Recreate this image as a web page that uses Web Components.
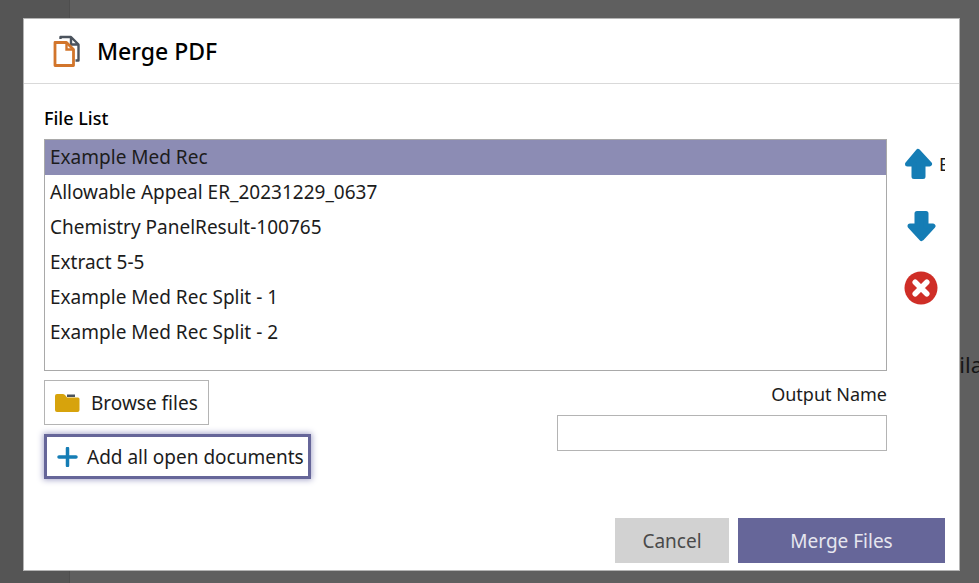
<!DOCTYPE html>
<html lang="en">
<head>
<meta charset="utf-8">
<title>Merge PDF</title>
<style>
  body {
    margin: 0;
    font-family: "Noto Sans", "Open Sans", sans-serif;
    font-size: 18px;
    line-height: 24px;
    color: #1c1c1c;
  }
</style>
</head>
<body>
<app-backdrop>
  <span slot="page">ila</span>
  <merge-dialog></merge-dialog>
</app-backdrop>

<script>
const backdropTemplate = document.createElement('template')
backdropTemplate.innerHTML = `
<style>
  :host {
    display: grid;
    grid-template-columns: 70px 1fr;
    min-height: 100vh;
    background: #5f5f5f;
    overflow: hidden;
  }

  aside {
    grid-area: 1 / 1;
    background: #555555;
    border-right: 1px solid #4e4e4e;
  }

  /* the page is a little wider than the window */
  main {
    grid-area: 1 / 2;
    margin-right: -4px;
    padding-top: 350px;
    text-align: right;
    font-size: 22px;
    line-height: 28px;
    color: #161616;
  }

  .overlay {
    grid-area: 1 / 1 / 2 / 3;
    z-index: 1;
    display: grid;
    padding: 18px 19px 12px 23px;
  }
</style>

<aside></aside>
<main><slot name="page"></slot></main>
<div class="overlay"><slot></slot></div>
`

customElements.define('app-backdrop',

  class extends HTMLElement {
    constructor() {
      super()

      this.attachShadow({ mode: 'open' }).appendChild(backdropTemplate.content.cloneNode(true))
    }
  }
)

const buttonTemplate = document.createElement('template')
buttonTemplate.innerHTML = `
<style>
  :host {
    display: block;
  }

  button {
    display: flex;
    align-items: center;
    justify-content: center;
    gap: 11px;
    box-sizing: border-box;
    width: 100%;
    height: 45px;
    margin: 0;
    padding: 0 10px;
    border: 1px solid #b4b4b4;
    background: #ffffff;
    color: #1c1c1c;
    font: inherit;
    font-size: 19px;
    white-space: nowrap;
    cursor: pointer;
  }

  :host([variant="focused"]) button {
    gap: 9px;
    padding: 0 4px 0 10px;
    border: 3px solid #666699;
    box-shadow: 0 0 6px 1px #a9a9cc;
  }

  :host([variant="secondary"]) button {
    border-color: #d2d2d2;
    background: #d2d2d2;
    color: #4a4a4a;
  }

  :host([variant="primary"]) button {
    border-color: #666699;
    background: #666699;
    color: #e6e6ef;
  }
</style>

<button type="button"><slot name="icon"></slot><slot></slot></button>
`

customElements.define('action-button',

  class extends HTMLElement {
    constructor() {
      super()

      this.attachShadow({ mode: 'open' }).appendChild(buttonTemplate.content.cloneNode(true))
    }
  }
)

const listTemplate = document.createElement('template')
listTemplate.innerHTML = `
<style>
  :host {
    display: block;
    border: 1px solid #a9a9a9;
    background: #ffffff;
  }

  ul {
    min-height: 230px;
    margin: 0;
    padding: 0;
    list-style: none;
  }

  li {
    padding: 5px;
    font-size: 19px;
    line-height: 25px;
  }

  li[aria-selected="true"] {
    background: #8c8cb4;
  }
</style>

<ul role="listbox" aria-label="File List"></ul>
`

customElements.define('file-list',

  class extends HTMLElement {

    #list

    constructor() {
      super()

      this.attachShadow({ mode: 'open' }).appendChild(listTemplate.content.cloneNode(true))

      this.#list = this.shadowRoot.querySelector('ul')
    }

    renderFiles(files, selected) {
      this.#list.innerHTML = ''
      files.forEach((file, index) => {
        const item = document.createElement('li')
        item.setAttribute('role', 'option')
        item.setAttribute('aria-selected', String(index === selected))
        item.textContent = file
        this.#list.appendChild(item)
      })
    }
  }
)

const toolsTemplate = document.createElement('template')
toolsTemplate.innerHTML = `
<style>
  :host {
    display: flex;
    flex-direction: column;
    gap: 12px;
    overflow: hidden;
  }

  button {
    display: flex;
    align-items: center;
    gap: 5px;
    height: 50px;
    margin: 0;
    padding: 0;
    border: 0;
    background: none;
    color: #1c1c1c;
    font: inherit;
    cursor: pointer;
  }

  svg {
    flex: none;
    display: block;
  }
</style>

<button type="button" aria-label="Move up">
  <svg width="30" height="32" viewBox="0 0 30 32">
    <path d="M14 3.500 L25.500 16 H19 V28.500 H10 V16 H3.500 Z" fill="#157db5" stroke="#157db5" stroke-width="5" stroke-linejoin="round"/>
  </svg>
  <span>E</span>
</button>
<button type="button" aria-label="Move down">
  <svg width="34" height="32" viewBox="0 0 34 32">
    <path d="M17.500 28.500 L29 16 H22 V3.500 H13 V16 H6 Z" fill="#157db5" stroke="#157db5" stroke-width="5" stroke-linejoin="round"/>
  </svg>
</button>
<button type="button" aria-label="Remove">
  <svg width="34" height="34" viewBox="0 0 34 34">
    <circle cx="17" cy="17" r="16.5" fill="#cf2e27"/>
    <path d="M11.2 11.2 L22.8 22.8 M22.8 11.2 L11.2 22.8" stroke="#ffffff" stroke-width="5.5" stroke-linecap="round"/>
  </svg>
</button>
`

customElements.define('order-tools',

  class extends HTMLElement {
    constructor() {
      super()

      this.attachShadow({ mode: 'open' }).appendChild(toolsTemplate.content.cloneNode(true))
    }
  }
)

const dialogTemplate = document.createElement('template')
dialogTemplate.innerHTML = `
<style>
  :host {
    display: flex;
    flex-direction: column;
    border: 1px solid #b4b4b4;
    background: #ffffff;
  }

  header {
    display: flex;
    align-items: center;
    gap: 16px;
    height: 64px;
    padding: 0 29px;
    border-bottom: 1px solid #d9d9d9;
  }

  h1 {
    margin: 0;
    font-size: 23px;
    line-height: 32px;
    font-weight: 500;
    color: #000000;
  }

  h2 {
    margin: 0;
    font-size: 18px;
    line-height: 24px;
    font-weight: 500;
    color: #000000;
  }

  svg {
    flex: none;
    display: block;
  }

  .content {
    display: grid;
    grid-template-columns: 1fr 41px;
    column-gap: 17px;
    padding: 22px 14px 0 20px;
  }

  h2 {
    grid-column: 1 / 3;
    margin-bottom: 9px;
  }

  .fields {
    display: flex;
    justify-content: space-between;
    padding-top: 9px;
  }

  .sources {
    display: flex;
    flex-direction: column;
    align-items: flex-start;
    gap: 9px;
  }

  .output {
    display: flex;
    flex-direction: column;
    gap: 9px;
    width: 330px;
    padding-top: 2px;
  }

  label {
    text-align: right;
  }

  input {
    box-sizing: border-box;
    width: 100%;
    height: 36px;
    padding: 0 8px;
    border: 1px solid #b4b4b4;
    font: inherit;
  }

  footer {
    display: flex;
    justify-content: flex-end;
    gap: 9px;
    margin-top: auto;
    padding: 0 14px 7px;
  }

  footer action-button:first-child {
    width: 114px;
  }

  footer action-button:last-child {
    width: 207px;
  }
</style>

<header>
  <svg width="28" height="32" viewBox="0 0 28 32">
    <path d="M7.500 4 V2 H18 L25.500 9.500 V25.500 H22.500 M18 2 V9.500 H25.500" fill="none" stroke="#4b535d" stroke-width="2.400" stroke-linejoin="round"/>
    <path d="M2 7.500 H13.500 L20.500 14.500 V30.500 H2 Z" fill="#ffffff" stroke="#d2752b" stroke-width="2.800" stroke-linejoin="round"/>
    <path d="M13.500 7.500 V14.500 H20.500" fill="none" stroke="#d2752b" stroke-width="2.400"/>
  </svg>
  <h1>Merge PDF</h1>
</header>
<div class="content">
  <h2>File List</h2>
  <file-list></file-list>
  <order-tools></order-tools>
  <div class="fields">
    <div class="sources">
      <action-button>
        <svg slot="icon" width="25" height="20" viewBox="0 0 25 20">
          <path d="M12 1.500 H20 V4 H12 Z" fill="#4b535d"/>
          <path d="M0 3 Q0 1 2 1 H8 Q9.500 1 10.500 2.500 L12 4.500 H23 Q24.500 4.500 24.500 6 V17 Q24.500 19 22.500 19 H2 Q0 19 0 17 Z" fill="#d7a30c"/>
        </svg>
        Browse files
      </action-button>
      <action-button variant="focused">
        <svg slot="icon" width="21" height="20" viewBox="0 0 21 20">
          <path d="M10.500 1.500 V18.500 M2 10 H19" stroke="#157db5" stroke-width="3.500" stroke-linecap="round"/>
        </svg>
        Add all open documents
      </action-button>
    </div>
    <div class="output">
      <label for="output-name">Output Name</label>
      <input id="output-name" type="text">
    </div>
  </div>
</div>
<footer>
  <action-button variant="secondary">Cancel</action-button>
  <action-button variant="primary">Merge Files</action-button>
</footer>
`

customElements.define('merge-dialog',

  class extends HTMLElement {
    constructor() {
      super()

      this.attachShadow({ mode: 'open' }).appendChild(dialogTemplate.content.cloneNode(true))

      this.shadowRoot.querySelector('file-list').renderFiles([
        'Example Med Rec',
        'Allowable Appeal ER_20231229_0637',
        'Chemistry PanelResult-100765',
        'Extract 5-5',
        'Example Med Rec Split - 1',
        'Example Med Rec Split - 2'
      ], 0)
    }
  }
)
</script>
</body>
</html>
